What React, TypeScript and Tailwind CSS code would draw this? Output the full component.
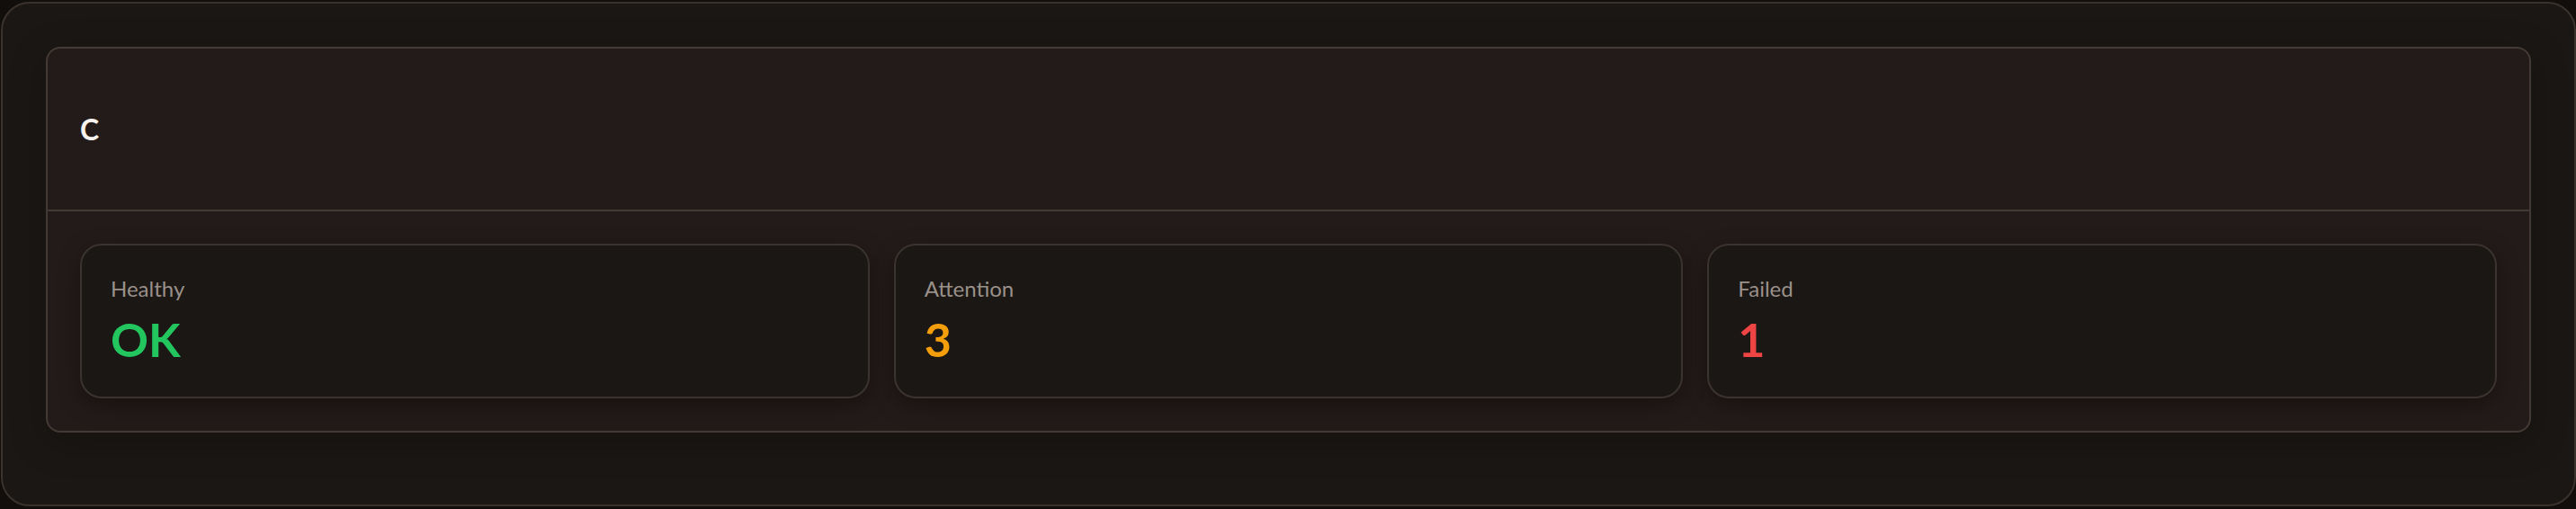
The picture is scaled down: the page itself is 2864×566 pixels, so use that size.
import React from 'react'

type Stat = { label: string; value: string; tone: string }

const stats: Stat[] = [
  { label: 'Healthy', value: 'OK', tone: 'text-[#22c55e]' },
  { label: 'Attention', value: '3', tone: 'text-[#f59e0b]' },
  { label: 'Failed', value: '1', tone: 'text-[#ef4444]' },
]

function StatCard({ label, value, tone }: Stat) {
  return (
    <div className="flex-1 rounded-[24px] border-2 border-[#3b332f] bg-[#1b1714] p-[32px] shadow-[0_8px_24px_rgba(0,0,0,0.35)]">
      <div className="h-[32px] text-[24px] leading-[32px] text-[#9a908a]">{label}</div>
      <div className={`mt-[8px] text-[52px] font-bold leading-[64px] ${tone}`}>{value}</div>
    </div>
  )
}

export default function App() {
  return (
    <div
      className="h-[566px] w-[2864px] overflow-hidden bg-[#110e0c] pt-[2px] pl-[1px]"
      style={{ fontFamily: 'Lato, "Noto Sans", sans-serif' }}
    >
      <div className="w-[2863px] rounded-[32px] border-2 border-[#3a322d] bg-[#1b1714] px-[48px] pt-[48px] pb-[80px]">
        {/* status panel */}
        <div className="rounded-[16px] border-2 border-[#443a35] bg-[#231b19] shadow-[0_10px_40px_rgba(0,0,0,0.25)]">
          <div className="flex h-[181px] items-center border-b-2 border-[#443a35] px-[36px]">
            <h2 className="text-[32px] font-bold text-[#f7f2ee]">C</h2>
          </div>
          <div className="flex gap-[27px] p-[36px]">
            {stats.map((s) => (
              <StatCard key={s.label} {...s} />
            ))}
          </div>
        </div>
      </div>
    </div>
  )
}
